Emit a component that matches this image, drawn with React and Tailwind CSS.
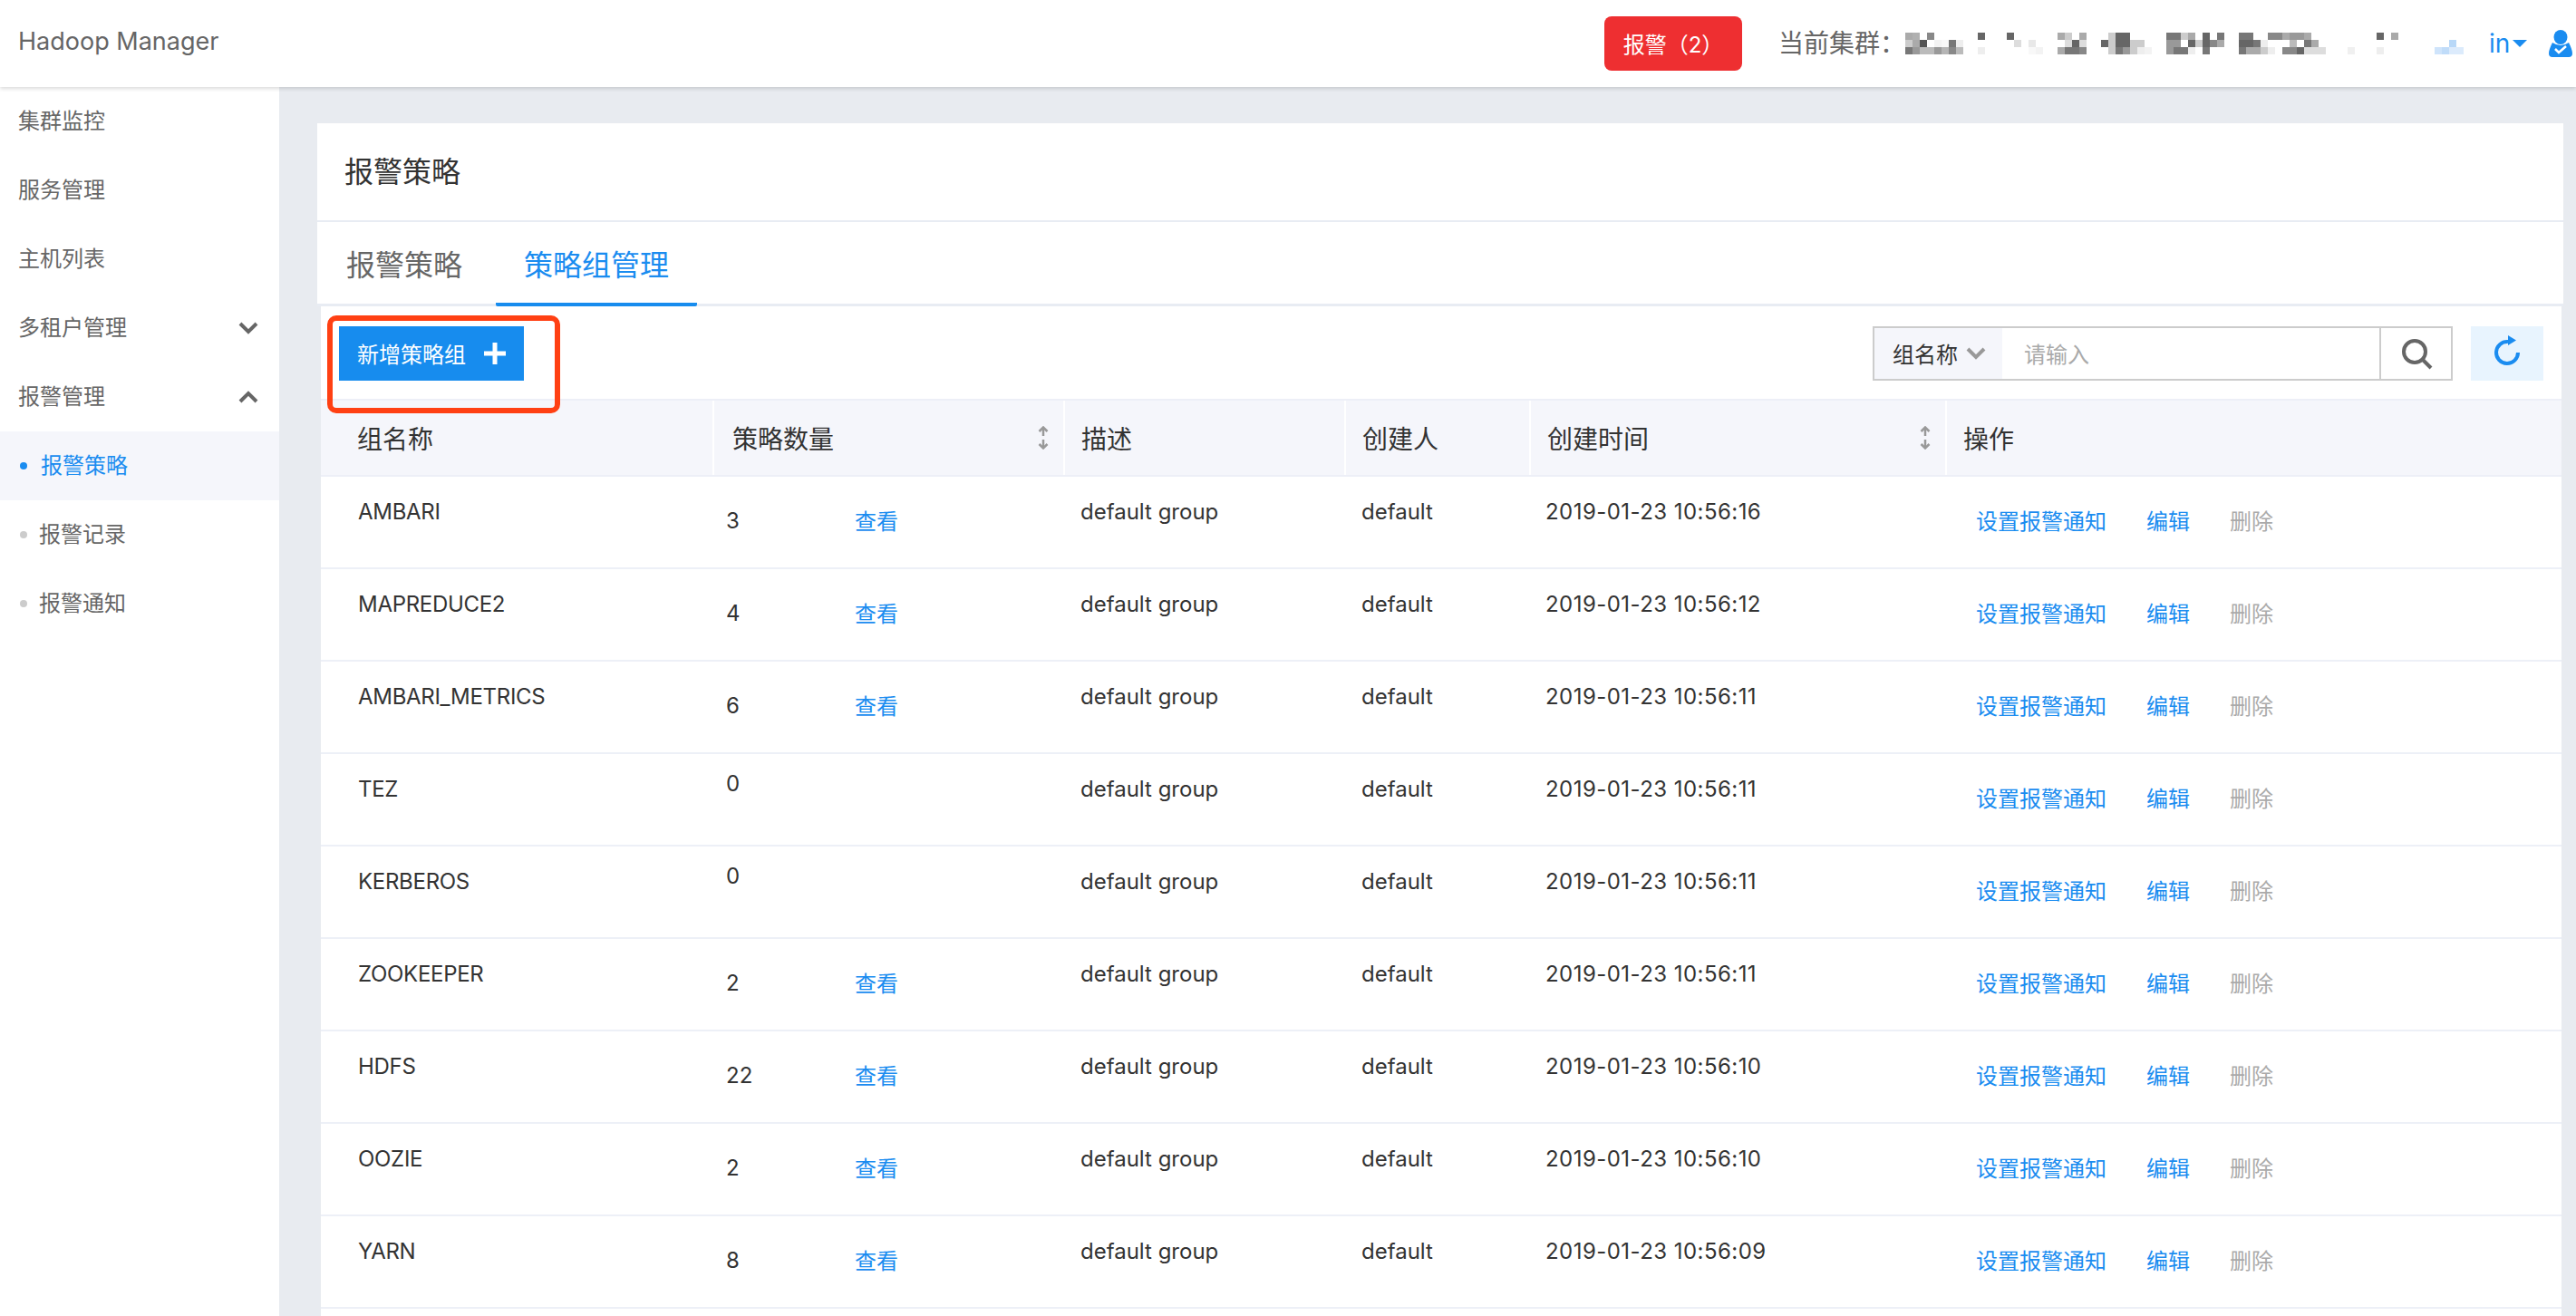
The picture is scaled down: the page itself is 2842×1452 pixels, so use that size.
import React from "react";

const rows = [
  ["AMBARI", "3", "2019-01-23 10:56:16"],
  ["MAPREDUCE2", "4", "2019-01-23 10:56:12"],
  ["AMBARI_METRICS", "6", "2019-01-23 10:56:11"],
  ["TEZ", "0", "2019-01-23 10:56:11"],
  ["KERBEROS", "0", "2019-01-23 10:56:11"],
  ["ZOOKEEPER", "2", "2019-01-23 10:56:11"],
  ["HDFS", "22", "2019-01-23 10:56:10"],
  ["OOZIE", "2", "2019-01-23 10:56:10"],
  ["YARN", "8", "2019-01-23 10:56:09"],
  ["", "", ""],
];

// blurred cluster name: [column, row, colour] on an 8px mosaic
const mosaic = [
  [0,0,"#aaa"],[1,0,"#b0b0b0"],[3,0,"#888"],[10,0,"#666"],[14,0,"#666"],[21,0,"#aaa"],[22,0,"#ccc"],[24,0,"#aaa"],
  [28,0,"#ccc"],[29,0,"#666"],[30,0,"#666"],[36,0,"#777"],[37,0,"#777"],[38,0,"#ccc"],[39,0,"#aaa"],
  [41,0,"#666"],[43,0,"#777"],[46,0,"#777"],[47,0,"#777"],[50,0,"#888"],[51,0,"#888"],[52,0,"#aaa"],[53,0,"#999"],[54,0,"#999"],[55,0,"#aaa"],
  [65,0,"#666"],[67,0,"#aaa"],
  [0,1,"#ccc"],[1,1,"#aaa"],[2,1,"#555"],[4,1,"#f3f3f3"],[5,1,"#f8f8f8"],[6,1,"#777"],[7,1,"#eee"],[15,1,"#ddd"],[17,1,"#e8e8e8"],
  [22,1,"#ddd"],[23,1,"#666"],[24,1,"#ddd"],[27,1,"#666"],[28,1,"#ccc"],[29,1,"#666"],[30,1,"#666"],[31,1,"#ccc"],[32,1,"#ccc"],
  [36,1,"#999"],[37,1,"#999"],[39,1,"#666"],[40,1,"#ccc"],[41,1,"#666"],[42,1,"#888"],[43,1,"#aaa"],
  [46,1,"#666"],[47,1,"#666"],[48,1,"#777"],[49,1,"#eee"],[53,1,"#bbb"],[55,1,"#777"],[56,1,"#aaa"],[75,1,"#b8d8f8"],
  [0,2,"#777"],[1,2,"#999"],[2,2,"#bbb"],[3,2,"#bbb"],[4,2,"#999"],[5,2,"#b5b5b5"],[6,2,"#888"],[7,2,"#bbb"],[10,2,"#eee"],
  [17,2,"#f8f8f8"],[18,2,"#f3f3f3"],[21,2,"#aaa"],[22,2,"#777"],[23,2,"#777"],[24,2,"#888"],
  [28,2,"#ccc"],[29,2,"#777"],[30,2,"#999"],[31,2,"#ccc"],[32,2,"#eee"],[33,2,"#f3f3f3"],
  [36,2,"#999"],[37,2,"#777"],[38,2,"#777"],[39,2,"#eee"],[41,2,"#777"],
  [46,2,"#777"],[47,2,"#aaa"],[48,2,"#aaa"],[49,2,"#ccc"],[50,2,"#eee"],[52,2,"#888"],[53,2,"#888"],[54,2,"#666"],
  [55,2,"#ddd"],[56,2,"#ddd"],[57,2,"#ddd"],[61,2,"#f0f0f0"],[65,2,"#eee"],
  [73,2,"#cfe4fb"],[74,2,"#c0dcf9"],[75,2,"#dcebfc"],[76,2,"#dcebfc"],
];

const Chevron = ({ up, className, color = "#666" }) => (
  <svg viewBox="0 0 22 14" className={className} fill="none">
    <path d={up ? "M2 12 L11 3 L20 12" : "M2 2 L11 11 L20 2"} stroke={color} strokeWidth="4" />
  </svg>
);

const SortIcon = () => (
  <svg viewBox="0 0 12 26" className="w-[12px] h-[26px] shrink-0" fill="none" stroke="#999" strokeWidth="2.5">
    <path d="M6 2 V11" />
    <path d="M1.5 6 L6 1.5 L10.5 6" />
    <path d="M6 15 V24" />
    <path d="M1.5 20 L6 24.5 L10.5 20" />
  </svg>
);

const SideItem = ({ label, children }) => (
  <div className="h-[76px] pl-5 pr-[23px] flex items-center justify-between text-[24px] text-[#666]">
    <span>{label}</span>
    {children}
  </div>
);

const SubItem = ({ label, active }) => (
  <div className={`h-[76px] pl-[22px] flex items-center text-[24px] ${active ? "bg-[#f5f6fb] text-[#1a8cf0]" : "text-[#666]"}`}>
    <span className={`w-2 h-2 rounded-full ${active ? "mr-[15px] bg-[#1a8cf0]" : "mr-[13px] bg-[#ccc]"}`} />
    <span>{label}</span>
  </div>
);

const HeadCell = ({ label, sort, pad }) => (
  <div className={`flex items-center justify-between pr-[16px] ${pad}`}>
    <span className="pt-[3px]">{label}</span>
    {sort && <SortIcon />}
  </div>
);

export default function App() {
  return (
    <div className="w-[2842px] h-[1452px] overflow-hidden flex flex-col bg-[#e8ebf0] font-['Inter','Noto_Sans_CJK_SC',sans-serif]">
      {/* top bar */}
      <header className="relative z-10 h-[96px] shrink-0 bg-white flex items-center pl-5 shadow-[0_2px_4px_rgba(0,0,0,0.14)]">
        <span className="text-[27px] text-[#666] -mt-1">Hadoop Manager</span>
        <button className="ml-auto w-[152px] h-[60px] pt-[3px] rounded-lg bg-[#ee2f31] text-white text-[24px]">报警（2）</button>
        <span className="ml-[40px] w-[140px] whitespace-nowrap text-[28px] text-[#666]">当前集群：</span>
        <svg viewBox="0 0 616 24" className="w-[616px] h-[24px] shrink-0 -mt-[1px]">
          {mosaic.map(([c, r, f], i) => (
            <rect key={i} x={c * 8} y={r * 8} width="8" height="8" fill={f} />
          ))}
        </svg>
        <span className="ml-[28px] text-[28px] text-[#1a8cf0] w-[26px]">in</span>
        <svg viewBox="0 0 16 8" className="w-4 h-2 shrink-0" fill="#1a8cf0">
          <path d="M0 0 H16 L8 8 Z" />
        </svg>
        <svg viewBox="0 0 26 30" className="ml-[24px] w-[26px] h-[30px] shrink-0 mr-1">
          <ellipse cx="13" cy="8" rx="7.5" ry="8" fill="#1a8cf0" />
          <path d="M4 14 C1.5 19 0 23 0 26 Q0 30 4 30 H22 Q26 30 26 26 C26 23 24.5 19 22 14 Q13 20 4 14Z" fill="#1a8cf0" />
          <path d="M7 21 L11 25 L19 18" stroke="#fff" strokeWidth="2.5" fill="none" />
        </svg>
      </header>

      <div className="flex flex-1 min-h-0">
        {/* side menu */}
        <aside className="w-[308px] shrink-0 bg-white">
          <SideItem label="集群监控" />
          <SideItem label="服务管理" />
          <SideItem label="主机列表" />
          <SideItem label="多租户管理">
            <Chevron className="w-[22px] h-[14px]" />
          </SideItem>
          <SideItem label="报警管理">
            <Chevron up className="w-[22px] h-[14px]" />
          </SideItem>
          <SubItem label="报警策略" active />
          <SubItem label="报警记录" />
          <SubItem label="报警通知" />
        </aside>

        <main className="flex-1 min-w-0 pl-[42px] pr-[14px] pt-[40px]">
          {/* page title and tabs */}
          <div className="bg-white">
            <div className="h-[109px] flex items-center pl-[30px] border-b-2 border-[#e8ecf3] text-[32px] text-[#333]">报警策略</div>
            <div className="h-[93px] flex items-start border-b-[3px] border-[#e8ecf3] text-[32px]">
              <div className="w-[197px] pl-[32px] leading-[95px] text-[#666]">报警策略</div>
              <div className="w-[222px] h-[93px] box-border border-b-4 border-[#178cee] rounded-b-[2px] text-center leading-[95px] text-[#1a8cf0]">策略组管理</div>
            </div>
          </div>

          <div className="ml-1 mr-[2px] bg-white">
            {/* toolbar */}
            <div className="relative h-[102px] flex items-start pt-[22px] pl-5 pr-5">
              <button className="w-[204px] h-[60px] bg-[#178cee] text-white text-[24px] flex items-center pl-5">
                <span className="pt-[3px]">新增策略组</span>
                <svg viewBox="0 0 24 24" className="ml-[20px] w-6 h-6" fill="#fff">
                  <path d="M9.5 0 H14.5 V9.5 H24 V14.5 H14.5 V24 H9.5 V14.5 H0 V9.5 H9.5 Z" />
                </svg>
              </button>
              <div className="ml-auto w-[640px] h-[60px] box-border border-2 border-[#ccc] flex text-[24px]">
                <div className="w-[141px] bg-[#f5f6fb] flex items-center pl-[20px] text-[#333]">
                  <span className="pt-[3px]">组名称</span>
                  <Chevron className="ml-[9px] w-[22px] h-[14px]" color="#999" />
                </div>
                <input placeholder="请输入" className="flex-1 min-w-0 pl-[24px] pt-[3px] outline-none placeholder:text-[#aaa]" />
                <div className="w-[79px] border-l-2 border-[#ccc] flex items-center justify-center">
                  <svg viewBox="0 0 36 36" className="w-9 h-9" fill="none" stroke="#666" strokeWidth="4">
                    <circle cx="16" cy="16" r="12" />
                    <path d="M25 25 L34 34" />
                  </svg>
                </div>
              </div>
              <button className="ml-[20px] w-[80px] h-[60px] bg-[#e8f4fe] flex items-center justify-center">
                <svg viewBox="0 0 32 36" className="w-8 h-9 -mt-[6px]" fill="none">
                  <path d="M28 20 A12 12 0 1 1 17 8" stroke="#1a8cf0" strokeWidth="4" />
                  <path d="M17 1 L26 6.5 L17 12 Z" fill="#1a8cf0" />
                </svg>
              </button>
              {/* red annotation around the add button */}
              <div className="absolute left-[7px] top-[10px] w-[257px] h-[108px] box-border border-[6px] border-[#ff4013] rounded-[10px] z-10" />
            </div>

            {/* table head */}
            <div className="grid grid-cols-[432px_387px_310px_204px_459px_680px] h-[86px] box-border bg-[#f5f6fb] border-y-2 border-[#edeff7] text-[28px] text-[#333]">
              <HeadCell label="组名称" pad="pl-[40px]" />
              <HeadCell label="策略数量" sort pad="pl-[20px] border-l-2 border-white" />
              <HeadCell label="描述" pad="pl-[18px] border-l-2 border-white" />
              <HeadCell label="创建人" pad="pl-[18px] border-l-2 border-white" />
              <HeadCell label="创建时间" sort pad="pl-[18px] border-l-2 border-white" />
              <HeadCell label="操作" pad="pl-[18px] border-l-2 border-white" />
            </div>

            {/* table body */}
            {rows.map(([name, count, time], i) => (
              <div key={i} className="grid grid-cols-[432px_387px_310px_204px_459px_680px] h-[102px] box-border border-b-2 border-[#edf0f7] text-[24px] leading-[36px] text-[#333]">
                {name && (
                  <>
                    <div className="pl-[41px] pt-[21px] tracking-[-0.3px]">{name}</div>
                    <div className="pl-[15px] flex items-start">
                      <span className={`w-[142px] ${count === "0" ? "pt-[15px]" : "pt-[31px]"}`}>{count}</span>
                      {count !== "0" && <a className="pt-[32px] text-[#1a8cf0]">查看</a>}
                    </div>
                    <div className="pl-[19px] pt-[21px]">default group</div>
                    <div className="pl-[19px] pt-[21px]">default</div>
                    <div className="pl-[18px] pt-[21px] tracking-[0.45px]">{time}</div>
                    <div className="pl-[34px] pt-[32px] flex gap-[44px] text-[#1a8cf0]">
                      <a>设置报警通知</a>
                      <a>编辑</a>
                      <a className="text-[#aaa]">删除</a>
                    </div>
                  </>
                )}
              </div>
            ))}
          </div>
        </main>
      </div>
    </div>
  );
}
